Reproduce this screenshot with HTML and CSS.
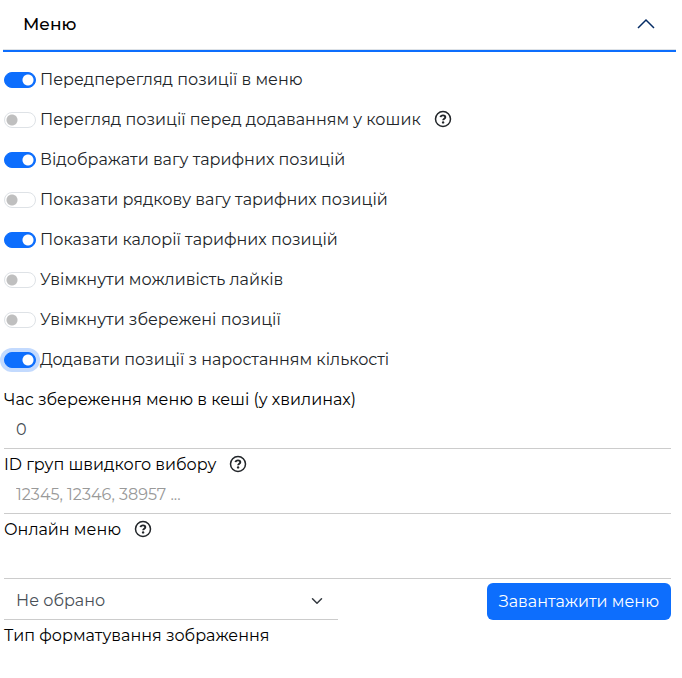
FILE: index.html
```html
<!DOCTYPE html>
<html lang="uk">
<head>
    <meta charset="UTF-8">
    <meta name="viewport" content="width=device-width, initial-scale=1.0">
    <title>Меню</title>
    <link rel="stylesheet" href="styles.css">
</head>
<body>

<svg class="sprite" aria-hidden="true">
    <symbol id="question" viewBox="0 0 18 18">
        <circle cx="9" cy="9" r="7.5" fill="none" stroke="currentColor" stroke-width="1.5"/>
        <path d="M6.5 7.200C6.700 5.900 7.700 5.400 9 5.400c1.400 0 2.300.7 2.300 1.800 0 1.500-2.200 1.500-2.200 3.100" fill="none" stroke="currentColor" stroke-width="1.900"/>
        <circle cx="9.100" cy="12.400" r="1.200" fill="currentColor"/>
    </symbol>
</svg>

<section class="accordion">
    <h2 class="accordion-header">
        <button type="button" class="accordion-button" aria-expanded="true" onclick="toggleMenu(this)">
            <span>Меню</span>
            <svg class="chevron" viewBox="0 0 20 20" aria-hidden="true">
                <path d="M2 14l8-8 8 8" fill="none" stroke="currentColor" stroke-width="1.500"/>
            </svg>
        </button>
    </h2>

    <form class="accordion-body" id="menuSettings">
        <div class="switch-list">
            <div class="switch-row">
                <input type="checkbox" role="switch" class="switch" id="preview" checked>
                <label for="preview">Передперегляд позиції в меню</label>
            </div>
            <div class="switch-row">
                <input type="checkbox" role="switch" class="switch" id="cartPreview">
                <label for="cartPreview">Перегляд позиції перед додаванням у кошик</label>
                <svg class="help" aria-hidden="true"><use href="#question"/></svg>
            </div>
            <div class="switch-row">
                <input type="checkbox" role="switch" class="switch" id="weight" checked>
                <label for="weight">Відображати вагу тарифних позицій</label>
            </div>
            <div class="switch-row">
                <input type="checkbox" role="switch" class="switch" id="stringWeight">
                <label for="stringWeight">Показати рядкову вагу тарифних позицій</label>
            </div>
            <div class="switch-row">
                <input type="checkbox" role="switch" class="switch" id="calories" checked>
                <label for="calories">Показати калорії тарифних позицій</label>
            </div>
            <div class="switch-row">
                <input type="checkbox" role="switch" class="switch" id="likes">
                <label for="likes">Увімкнути можливість лайків</label>
            </div>
            <div class="switch-row">
                <input type="checkbox" role="switch" class="switch" id="saved">
                <label for="saved">Увімкнути збережені позиції</label>
            </div>
            <div class="switch-row">
                <input type="checkbox" role="switch" class="switch focused" id="increment" checked>
                <label for="increment">Додавати позиції з наростанням кількості</label>
            </div>
        </div>

        <div class="field">
            <div class="field-label">
                <label for="cacheTime">Час збереження меню в кеші (у хвилинах)</label>
            </div>
            <input type="text" class="form-control" id="cacheTime" value="0">
        </div>
        <div class="field">
            <div class="field-label">
                <label for="groupIds">ID груп швидкого вибору</label>
                <svg class="help" aria-hidden="true"><use href="#question"/></svg>
            </div>
            <input type="text" class="form-control" id="groupIds" placeholder="12345, 12346, 38957 ...">
        </div>
        <div class="field">
            <div class="field-label">
                <label for="onlineMenu">Онлайн меню</label>
                <svg class="help" aria-hidden="true"><use href="#question"/></svg>
            </div>
            <input type="text" class="form-control" id="onlineMenu">
        </div>

        <div class="upload-row">
            <div class="select-wrap">
                <select class="form-control" id="menuSelect" aria-label="Онлайн меню">
                    <option>Не обрано</option>
                </select>
                <svg class="select-arrow" viewBox="0 0 16 16" aria-hidden="true">
                    <path d="M2 5l6 6 6-6" fill="none" stroke="currentColor" stroke-width="2" stroke-linecap="round" stroke-linejoin="round"/>
                </svg>
            </div>
            <button type="button" class="btn-primary">Завантажити меню</button>
        </div>

        <div class="field-label">Тип форматування зображення</div>
    </form>
</section>

<script>
    function toggleMenu(button) {
        const body = document.getElementById('menuSettings');
        body.hidden = !body.hidden;
        button.setAttribute('aria-expanded', String(!body.hidden));
    }
</script>

</body>
</html>
```
FILE: styles.css
```css
* {
    box-sizing: border-box;
}

body {
    margin: 0;
    padding: 0 6px 0 3px;
    background-color: #fff;
    color: #212529;
    font-family: Montserrat, Inter, sans-serif;
    font-size: 16px;
    line-height: 24px;
}

button,
input,
select {
    font: inherit;
}

.sprite {
    display: none;
}

.accordion-header {
    margin: 0;
    font-size: 17px;
}

.accordion-button {
    display: flex;
    justify-content: space-between;
    align-items: center;
    width: 100%;
    height: 52px;
    padding: 0 20px 2px;
    border: none;
    border-bottom: 2px solid #0d6efd;
    background-color: #fff;
    box-shadow: inset 0 -1px 0 #dee2e6;
    color: #000;
    font-weight: 500;
    cursor: pointer;
}

.accordion-button[aria-expanded="false"] .chevron {
    transform: rotate(180deg);
}

.chevron {
    width: 20px;
    height: 20px;
    color: #052c65;
}

.accordion-body {
    padding: 16px 5px 16px 1px;
}

.accordion-body[hidden] {
    display: none;
}

.switch-list {
    display: grid;
    gap: 16px;
    margin-bottom: 16px;
}

.switch-row {
    display: flex;
    align-items: center;
    gap: 4px;
}

.switch {
    display: flex;
    align-items: center;
    flex-shrink: 0;
    width: 32px;
    height: 16px;
    margin: 0;
    padding: 0 1px;
    border: 1px solid #dee2e6;
    border-radius: 16px;
    background-color: #fff;
    appearance: none;
    cursor: pointer;
}

.switch::before {
    content: "";
    width: 12px;
    height: 12px;
    background: radial-gradient(circle, #bfbfbf 5px, transparent 6px);
}

.switch:checked {
    justify-content: flex-end;
    border-color: #0d6efd;
    background-color: #0d6efd;
}

.switch:checked::before {
    background: radial-gradient(circle, #fff 5px, transparent 6px);
}

.switch.focused,
.switch:focus {
    outline: none;
    box-shadow: 0 0 0 4px #c3dafe;
}

.help {
    width: 18px;
    height: 18px;
    margin: 0 0 2px 9px;
    color: #212529;
}

.field {
    margin-bottom: 4px;
}

.field-label {
    display: flex;
    align-items: center;
    gap: 4px;
    color: #000;
}

.form-control {
    display: block;
    width: 100%;
    height: 37px;
    padding: 0 12px 2px;
    border: none;
    border-bottom: 1px solid #ccc;
    border-radius: 0;
    background-color: transparent;
    color: #495057;
    font-weight: 400;
    appearance: none;
}

.form-control:focus {
    outline: none;
    border-color: #0d6efd;
}

.form-control::placeholder {
    color: #999;
    opacity: 1;
}

.upload-row {
    display: flex;
    justify-content: space-between;
    align-items: center;
    margin-bottom: 4px;
}

.select-wrap {
    position: relative;
    width: 50%;
}

.select-wrap .form-control {
    padding-bottom: 0;
}

.select-arrow {
    position: absolute;
    top: 12px;
    right: 15px;
    width: 12px;
    height: 12px;
    color: #343a40;
    pointer-events: none;
}

.btn-primary {
    height: 37px;
    padding: 0 12px;
    border: none;
    border-radius: 6px;
    background-color: #0d6efd;
    color: #fff;
    cursor: pointer;
}
```
